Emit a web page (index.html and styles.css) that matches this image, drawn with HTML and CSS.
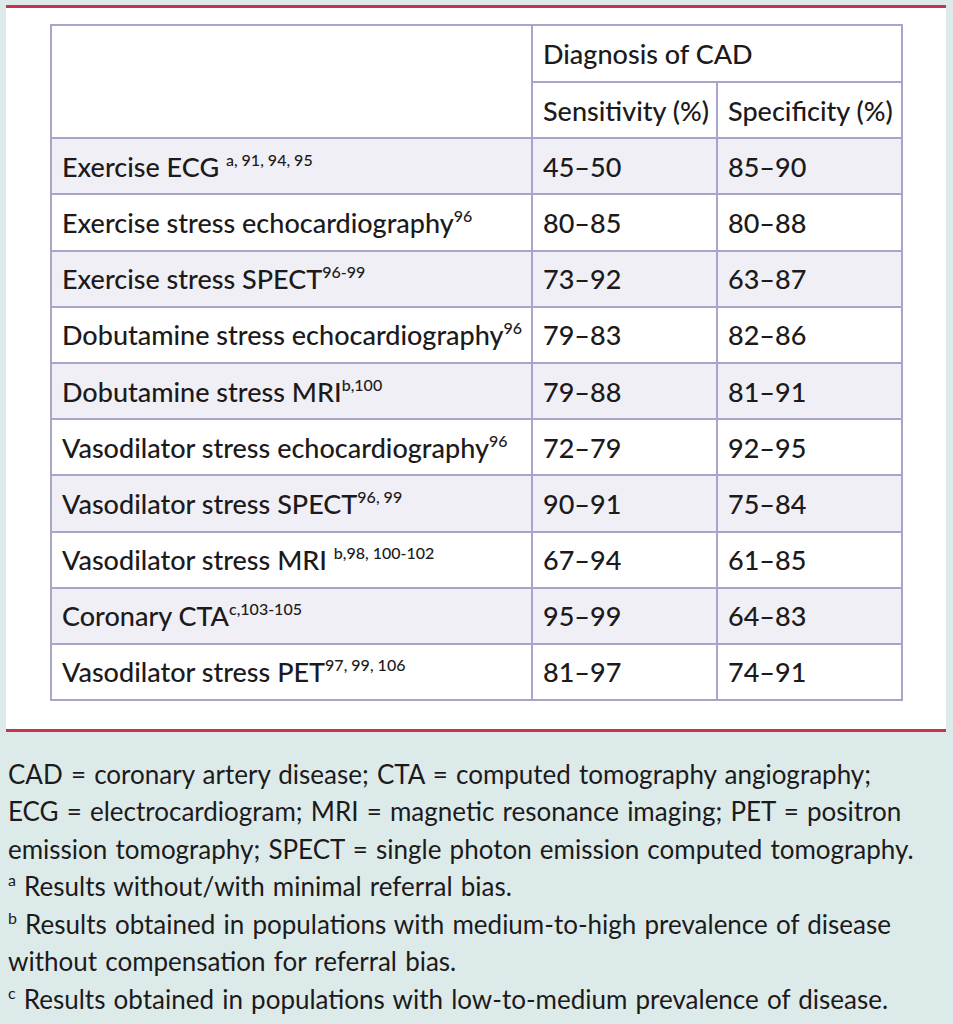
FILE: index.html
```html
<!DOCTYPE html>
<html lang="en">
<head>
<meta charset="utf-8">
<title>Diagnosis of CAD</title>
<link rel="stylesheet" href="styles.css">
</head>
<body>
<div class="panel">
  <table class="cad">
    <colgroup>
      <col class="c-name">
      <col class="c-val">
      <col class="c-val">
    </colgroup>
    <thead>
      <tr class="h1">
        <th class="blank" rowspan="2"></th>
        <th colspan="2">Diagnosis of CAD</th>
      </tr>
      <tr class="h2">
        <th>Sensitivity (%)</th>
        <th>Specificity (%)</th>
      </tr>
    </thead>
    <tbody>
      <tr class="alt"><td>Exercise ECG <sup>a, 91, 94, 95</sup></td><td>45–50</td><td>85–90</td></tr>
      <tr><td>Exercise stress echocardiography<sup>96</sup></td><td>80–85</td><td>80–88</td></tr>
      <tr class="alt"><td>Exercise stress SPECT<sup>96-99</sup></td><td>73–92</td><td>63–87</td></tr>
      <tr><td>Dobutamine stress echocardiography<sup>96</sup></td><td>79–83</td><td>82–86</td></tr>
      <tr class="alt"><td>Dobutamine stress MRI<sup>b,100</sup></td><td>79–88</td><td>81–91</td></tr>
      <tr><td>Vasodilator stress echocardiography<sup>96</sup></td><td>72–79</td><td>92–95</td></tr>
      <tr class="alt"><td>Vasodilator stress SPECT<sup>96, 99</sup></td><td>90–91</td><td>75–84</td></tr>
      <tr><td>Vasodilator stress MRI <sup>b,98, 100-102</sup></td><td>67–94</td><td>61–85</td></tr>
      <tr class="alt"><td>Coronary CTA<sup>c,103-105</sup></td><td>95–99</td><td>64–83</td></tr>
      <tr><td>Vasodilator stress PET<sup>97, 99, 106</sup></td><td>81–97</td><td>74–91</td></tr>
    </tbody>
  </table>
</div>
<div class="notes">
  <p>CAD = coronary artery disease; CTA = computed tomography angiography;<br>ECG = electrocardiogram; MRI = magnetic resonance imaging; PET = positron<br>emission tomography; SPECT = single photon emission computed tomography.</p>
  <p><sup>a</sup> Results without/with minimal referral bias.</p>
  <p><sup>b</sup> Results obtained in populations with medium-to-high prevalence of disease<br>without compensation for referral bias.</p>
  <p><sup>c</sup> Results obtained in populations with low-to-medium prevalence of disease.</p>
</div>
</body>
</html>
```

FILE: styles.css
```css
html, body {
  margin: 0;
  padding: 0;
}
body {
  background: #dcebea;
  color: #1c1a1b;
  font-family: "Lato", "Open Sans", sans-serif;
  padding-top: 5px;
}
.panel {
  margin: 0 7px 0 6px;
  background: #ffffff;
  border-top: 3px solid #c8314f;
  border-bottom: 3px solid #c8314f;
  padding: 16px 0 28px 44px;
}
.cad {
  border-collapse: collapse;
  table-layout: fixed;
  width: 852px;
  border: 2px solid #aaa4cd;
  font-size: 27px;
}
.cad .c-name { width: 481px; }
.cad .c-val { width: 185px; }
.cad th, .cad td {
  border: 2px solid #aaa4cd;
  text-align: left;
  font-weight: 500;
  padding: 0 10px;
  height: 54.2px;
  white-space: nowrap;
  overflow: visible;
}
.cad tr.h1 th { height: 55px; }
.cad tr.alt td {
  background: #f0eff5;
}
.cad sup {
  font-size: 16px;
  vertical-align: 11px;
  line-height: 0;
}
.notes {
  padding: 24px 8px 0 8px;
  font-size: 26px;
  line-height: 37.4px;
  word-spacing: 1.5px;
  white-space: nowrap;
}
.notes p {
  margin: 0;
}
.notes sup {
  font-size: 16px;
  vertical-align: 10px;
  line-height: 0;
}
```
